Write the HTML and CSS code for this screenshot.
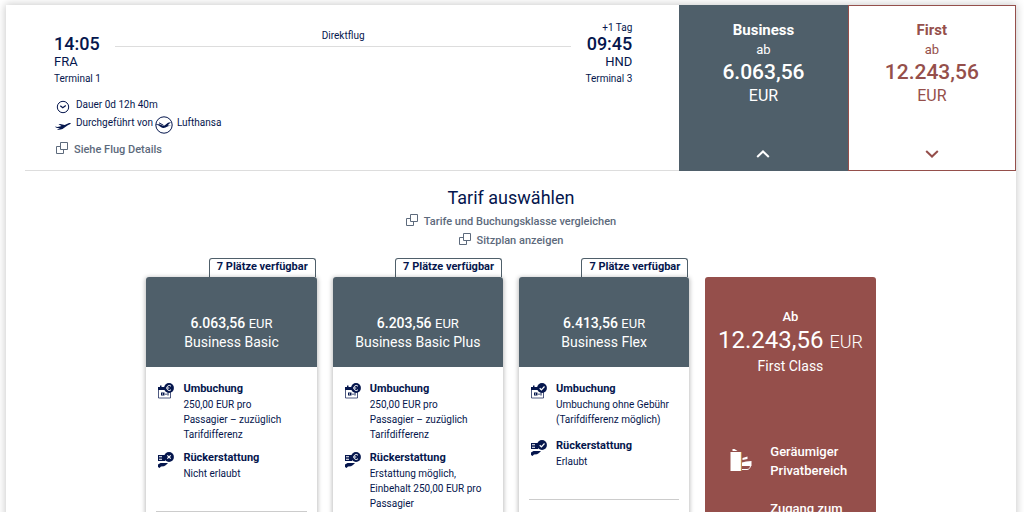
FILE: index.html
```html
<!DOCTYPE html>
<html lang="de">
<head>
<meta charset="utf-8">
<meta name="viewport" content="width=device-width, initial-scale=1">
<title>Tarif auswählen</title>
<link rel="stylesheet" href="styles.css">
</head>
<body>
<svg class="sprite" aria-hidden="true">
  <symbol id="i-window" viewBox="0 0 12 12"><path d="M4.500.5h7v7h-7zM4.500 4.500h-4v7h7v-4" fill="none" stroke="currentColor"/></symbol>
  <symbol id="i-calendar" viewBox="0 0 16 16"><path d="M.5 6.500V15h12V8" fill="none" stroke="currentColor" stroke-opacity=".7"/><path d="M0 4h2V2.500h1.500V4h4v3H0zM3 9.500h3.500v3H3zM7.500 10.500h1v1.500h-1zM9.500 9.500h1v3h-1z" fill="currentColor"/><path d="M4 10.500h1v1H4z" fill="#fff"/></symbol>
  <symbol id="i-hand" viewBox="0 0 16 16"><path d="M0 3h7v6H0z" fill="currentColor"/><path d="M1 4.200h3v1H1zM1 6.800h3v1H1z" fill="#fff"/><path d="M0 12.500l2.500-1.500H10l-2 2-2 1.200-3 .3-1.500 1.500L0 15z" fill="currentColor"/></symbol>
  <symbol id="i-euro" viewBox="0 0 10 10"><circle cx="5" cy="5" r="4.900" fill="currentColor"/><path d="M7 3.200a2.500 2.500 0 1 0 0 3.600M2.800 5h2.500" fill="none" stroke="#fff"/></symbol>
  <symbol id="i-cross" viewBox="0 0 10 10"><circle cx="5" cy="5" r="4.900" fill="currentColor"/><path d="M3.300 3.300l3.400 3.400M6.700 3.300L3.300 6.700" stroke="#fff" stroke-width="1.200"/></symbol>
  <symbol id="i-check" viewBox="0 0 10 10"><circle cx="5" cy="5" r="4.900" fill="currentColor"/><path d="M2.700 5.200l1.700 1.600L7.500 3.500" fill="none" stroke="#fff" stroke-width="1.200"/></symbol>
</svg>

<main class="panel">
  <header class="flight">
    <div class="flight-info">
      <div class="route">
        <div class="stop">
          <strong class="time">14:05</strong>
          <span class="airport">FRA</span>
          <span class="terminal">Terminal 1</span>
        </div>
        <div class="leg">Direktflug</div>
        <div class="stop stop-end">
          <span class="day">+1 Tag</span>
          <strong class="time">09:45</strong>
          <span class="airport">HND</span>
          <span class="terminal">Terminal 3</span>
        </div>
      </div>
      <div class="facts">
        <p class="fact">
          <svg class="fact-icon" viewBox="0 0 16 16"><circle cx="8" cy="8" r="5.700" fill="none" stroke="currentColor"/><path d="M5.300 6.800l2.500 2L10.800 6.500" fill="none" stroke="currentColor" stroke-width="1.200"/></svg>
          Dauer 0d 12h 40m
        </p>
        <p class="fact">
          <svg class="fact-icon" viewBox="0 0 16 16"><path d="M0 9.500c2 .9 5 .3 6.500-.4L3.500 7.300l1.500-.3 4.700.9L13.500 6.200c1.200-.4 2.200-.3 2.300.1 0 .6-1.500 1.400-3 2l-5.300 3.800c-2 .7-4 .7-5.500.4l3-1.500C3 11.300.8 10.800 0 9.500z" fill="currentColor"/></svg>
          Durchgeführt von
          <svg class="carrier" viewBox="0 0 18 18"><circle cx="9" cy="9" r="8.200" fill="none" stroke="currentColor"/><path d="M1.200 8.300h2.300c1.500 0 2.500.7 3.700 1.200 1.300.5 2.300.2 3.300-.7L13 6.800c.8-.6 1.800-.7 3-.6l-2.300 2-1 1.300H17c-1.700.3-3 .4-4.500.9-1.500.6-2.500 1.500-4 1.500-2 0-3.500-1.500-4.800-2.400-.7-.4-1.500-.4-2.500-.4z" fill="currentColor"/><path d="M4 6.800l4.500 2.500" fill="none" stroke="currentColor"/></svg>
          Lufthansa
        </p>
        <a class="more" href="#details"><svg class="window"><use href="#i-window"/></svg>Siehe Flug Details</a>
      </div>
    </div>
    <button class="cabin cabin-business" type="button" aria-expanded="true">
      <span class="cabin-name">Business</span>
      <span class="cabin-from">ab</span>
      <span class="cabin-price">6.063,56</span>
      <span class="cabin-currency">EUR</span>
      <svg class="chevron" viewBox="0 0 14 8"><path d="M1.200 7L7 1.500 12.800 7" fill="none" stroke="currentColor" stroke-width="2"/></svg>
    </button>
    <button class="cabin cabin-first" type="button" aria-expanded="false">
      <span class="cabin-name">First</span>
      <span class="cabin-from">ab</span>
      <span class="cabin-price">12.243,56</span>
      <span class="cabin-currency">EUR</span>
      <svg class="chevron" viewBox="0 0 14 8"><path d="M1.200 1L7 6.500 12.800 1" fill="none" stroke="currentColor" stroke-width="2"/></svg>
    </button>
  </header>

  <section class="choose">
    <h1 class="title">Tarif auswählen</h1>
    <a class="more" href="#compare"><svg class="window"><use href="#i-window"/></svg>Tarife und Buchungsklasse vergleichen</a>
    <a class="more" href="#seats"><svg class="window"><use href="#i-window"/></svg>Sitzplan anzeigen</a>
  </section>

  <section class="fares">
    <div class="fare">
      <span class="seats">7 Plätze verfügbar</span>
      <article class="card">
        <header class="card-head">
          <span class="card-price">6.063,56 <span class="unit">EUR</span></span>
          <h2 class="card-name">Business Basic</h2>
        </header>
        <div class="terms">
          <div class="term">
            <span class="term-icon"><svg class="base"><use href="#i-calendar"/></svg><svg class="badge"><use href="#i-euro"/></svg></span>
            <div><h3 class="term-name">Umbuchung</h3><p class="term-text">250,00 EUR pro Passagier&nbsp;–&nbsp;zuzüglich Tarifdifferenz</p></div>
          </div>
          <div class="term">
            <span class="term-icon"><svg class="base"><use href="#i-hand"/></svg><svg class="badge"><use href="#i-cross"/></svg></span>
            <div><h3 class="term-name">Rückerstattung</h3><p class="term-text">Nicht erlaubt</p></div>
          </div>
        </div>
      </article>
    </div>
    <div class="fare">
      <span class="seats">7 Plätze verfügbar</span>
      <article class="card">
        <header class="card-head">
          <span class="card-price">6.203,56 <span class="unit">EUR</span></span>
          <h2 class="card-name">Business Basic Plus</h2>
        </header>
        <div class="terms">
          <div class="term">
            <span class="term-icon"><svg class="base"><use href="#i-calendar"/></svg><svg class="badge"><use href="#i-euro"/></svg></span>
            <div><h3 class="term-name">Umbuchung</h3><p class="term-text">250,00 EUR pro Passagier&nbsp;–&nbsp;zuzüglich Tarifdifferenz</p></div>
          </div>
          <div class="term">
            <span class="term-icon"><svg class="base"><use href="#i-hand"/></svg><svg class="badge"><use href="#i-euro"/></svg></span>
            <div><h3 class="term-name">Rückerstattung</h3><p class="term-text">Erstattung möglich, Einbehalt 250,00 EUR pro Passagier</p></div>
          </div>
        </div>
      </article>
    </div>
    <div class="fare">
      <span class="seats">7 Plätze verfügbar</span>
      <article class="card">
        <header class="card-head">
          <span class="card-price">6.413,56 <span class="unit">EUR</span></span>
          <h2 class="card-name">Business Flex</h2>
        </header>
        <div class="terms">
          <div class="term">
            <span class="term-icon"><svg class="base"><use href="#i-calendar"/></svg><svg class="badge"><use href="#i-check"/></svg></span>
            <div><h3 class="term-name">Umbuchung</h3><p class="term-text">Umbuchung ohne Gebühr (Tarifdifferenz möglich)</p></div>
          </div>
          <div class="term">
            <span class="term-icon"><svg class="base"><use href="#i-hand"/></svg><svg class="badge"><use href="#i-check"/></svg></span>
            <div><h3 class="term-name">Rückerstattung</h3><p class="term-text">Erlaubt</p></div>
          </div>
        </div>
      </article>
    </div>
    <div class="fare">
      <article class="card card-first">
        <header class="first-head">
          <span class="first-from">Ab</span>
          <span class="first-price">12.243,56 <span class="first-unit">EUR</span></span>
          <h2 class="card-name">First Class</h2>
        </header>
        <ul class="perks">
          <li class="perk">
            <svg class="perk-icon" viewBox="0 0 24 24"><path d="M1.500 3H12v19H1.500zM3.500 0h2l3 2h-5zM13.500 9l5-1.500v2.500l-5 1zM13 13.500l4-1 5.500-.5v5H13z" fill="currentColor"/><path d="M13 20.500h5c2 0 3-1.500 3.500-3.500" fill="none" stroke="currentColor"/><path d="M12.200 3v19" stroke="#e8c35a" stroke-width=".7"/></svg>
            <span>Geräumiger Privatbereich</span>
          </li>
          <li class="perk">
            <span class="perk-icon"></span>
            <span>Zugang zum</span>
          </li>
        </ul>
      </article>
    </div>
  </section>
</main>
</body>
</html>
```
FILE: styles.css
```css
* { box-sizing: border-box; }

body {
  margin: 0;
  padding: 5px 8px 0 6px;
  background: #fff;
  color: #05164d;
  font: 11px/16px Roboto, "Liberation Sans", sans-serif;
  overflow: hidden;
}

h1, h2, h3, p, ul { margin: 0; padding: 0; font-weight: 400; }
a { color: inherit; text-decoration: none; }
button { font: inherit; cursor: pointer; }
svg { flex: none; }
.sprite { position: absolute; width: 0; height: 0; }

.panel {
  min-height: 100vh;
  background: #fff;
  box-shadow: 0 0 8px 1px rgba(0, 0, 0, 0.2);
}

.flight {
  display: grid;
  grid-template-columns: 4fr 1fr 1fr;
  background: linear-gradient(#ddd, #ddd) bottom / calc(100% - 38px) 1px no-repeat;
}

.flight-info { padding: 16px 47px 12px 48px; }

.route { display: flex; gap: 14px; align-items: flex-end; }
.stop { display: flex; flex-direction: column; }
.stop-end { align-items: flex-end; }
.day { font-size: 10px; line-height: 14px; }
.time { font-size: 18px; line-height: 18px; font-weight: 500; }
.airport { font-size: 13px; line-height: 18px; }
.terminal { font-size: 10px; line-height: 16px; }

.leg {
  flex: 1;
  margin-bottom: 40px;
  padding-bottom: 2px;
  border-bottom: 1px solid #ddd;
  font-size: 10px;
  text-align: center;
}

.facts { padding-top: 9px; }
.fact { display: flex; align-items: center; height: 18px; gap: 2px; font-size: 10px; }
.fact-icon { width: 16px; height: 16px; margin: 3px 3px 0 1px; }
.carrier { width: 18px; height: 18px; margin: 3px 2px 0 0; }

.more {
  display: flex;
  align-items: center;
  gap: 6px;
  color: #5d6a7c;
  font-weight: 500;
  line-height: 19px;
}
.facts .more { margin: 8px 0 0 2px; }
.window { width: 12px; height: 12px; margin-bottom: 4px; }

.cabin {
  display: flex;
  flex-direction: column;
  align-items: center;
  padding: 14px 4px 12px;
  border: 1px solid #4f5f6a;
  background: #4f5f6a;
  color: #fff;
}
.cabin-first { border-color: #954f4b; background: #fff; color: #954f4b; }
.cabin-name { font-size: 15px; line-height: 20px; font-weight: 700; }
.cabin-from { font-size: 13px; line-height: 20px; }
.cabin-price { font-size: 21px; line-height: 24px; font-weight: 500; }
.cabin-currency { font-size: 16px; line-height: 24px; }
.chevron { width: 14px; height: 8px; margin-top: auto; }

.choose {
  display: flex;
  flex-direction: column;
  align-items: center;
  padding-top: 13px;
}
.title { font-size: 18px; line-height: 28px; }

.fares {
  display: grid;
  grid-template-columns: repeat(4, 1fr);
  gap: 16px;
  width: 72.2%;
  max-width: 960px;
  margin: 8px auto 0;
}
.fare { display: flex; flex-direction: column; align-items: flex-end; padding-top: 19px; }
.seats {
  margin: -19px 1px 0 0;
  height: 19px;
  padding: 0 7px;
  border: 1px solid #4f5f6a;
  border-bottom: 0;
  border-radius: 3px 3px 0 0;
  font-weight: 700;
}
.card {
  flex: 1;
  width: 100%;
  border-radius: 3px;
  background: #fff;
  box-shadow: 0 1px 4px 1px rgba(0, 0, 0, 0.25);
}
.card-head {
  display: flex;
  flex-direction: column;
  align-items: center;
  height: 90px;
  padding-top: 37px;
  border-radius: 3px 3px 0 0;
  background: #4f5f6a;
  color: #fff;
}
.card-price { font-size: 14px; line-height: 18px; font-weight: 500; }
.unit { font-size: 13px; font-weight: 400; }
.card-name { font-size: 14px; line-height: 19px; }

.terms { margin: 0 10px; padding: 14px 0 4px; border-bottom: 1px solid #ccc; }
.term { display: flex; gap: 9px; min-height: 49px; margin: 0 2px 8px; }
.term-icon { position: relative; flex: none; width: 16px; height: 16px; margin-top: 2px; }
.base { width: 16px; height: 16px; }
.badge { position: absolute; top: 0; right: 0; width: 10px; height: 10px; }
.term-name { font-size: 11px; font-weight: 700; line-height: 16px; }
.term-text { font-size: 10px; line-height: 15px; }

.card-first { background: #954f4b; color: #fff; box-shadow: none; }
.first-head {
  display: flex;
  flex-direction: column;
  align-items: center;
  padding-top: 31px;
}
.first-from { font-size: 13px; line-height: 17px; font-weight: 500; }
.first-price { font-size: 24px; line-height: 30px; white-space: nowrap; }
.first-unit { font-size: 18px; font-weight: 300; }
.perks { margin-top: 66px; padding: 0 24px; list-style: none; }
.perk {
  display: flex;
  align-items: center;
  gap: 17px;
  margin-bottom: 16px;
  font-size: 13px;
  line-height: 19px;
  font-weight: 500;
}
.perk-icon { flex: none; width: 24px; height: 24px; }
```
